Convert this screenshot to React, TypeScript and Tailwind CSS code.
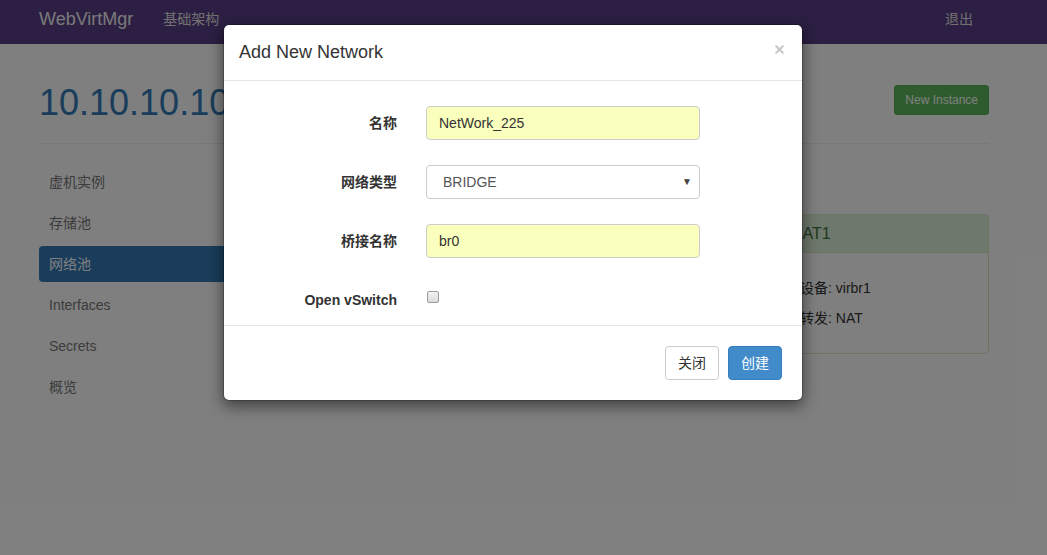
import { X } from "lucide-react";

const font = "font-['Liberation_Sans','Noto_Sans_CJK_SC',sans-serif]";

const navItems = ["虚机实例", "存储池", "网络池", "Interfaces", "Secrets", "概览"];

export default function App() {
  return (
    <div className={`relative h-[555px] w-[1047px] overflow-hidden bg-white text-[14px] text-[#333] ${font}`}>
      {/* Navbar */}
      <div className="flex h-[44px] items-center bg-[#583e86] pb-[5px] pl-[39px] pr-[74px]">
        <span className="text-[18px] text-[#f2f2f2]">WebVirtMgr</span>
        <span className="ml-[30px] text-[14px] text-[#e0e0e0]">基础架构</span>
        <span className="ml-auto text-[14px] text-[#e0e0e0]">退出</span>
      </div>

      {/* Page */}
      <div className="ml-[39px] w-[950px]">
        <div className="flex items-start justify-between border-b border-[#eeeeee] pb-[20px] pt-[39px]">
          <h1 className="h-[40px] text-[36px] leading-[40px] text-[#337ab7]">10.10.10.100</h1>
          <button className="mt-[2px] h-[30px] rounded-[3px] border border-[#4cae4c] bg-[#5cb85c] px-[10px] text-[12px] text-white">
            New Instance
          </button>
        </div>

        <div className="flex items-start">
          <div className="flex w-[200px] flex-col gap-[5px] pt-[20px]">
            {navItems.map((item) => (
              <div
                key={item}
                className={`flex h-[36px] items-center rounded-[4px] px-[10px] ${
                  item === "网络池" ? "bg-[#337ab7] text-white" : "text-[#777]"
                }`}
              >
                {item}
              </div>
            ))}
          </div>

          <div className="flex flex-1 items-start justify-end pt-[70px]">
            <div className="w-[214px] rounded-[4px] border border-[#d6e9c6]">
              <div className="flex h-[38px] items-center border-b border-[#d6e9c6] bg-[#dff0d8] px-[15px] text-[16px] text-[#3c763d]">
                NAT1
              </div>
              <div className="flex flex-col gap-[10px] py-[25px] pl-[24px] leading-[20px]">
                <div>设备: virbr1</div>
                <div>转发: NAT</div>
              </div>
            </div>
          </div>
        </div>
      </div>

      {/* Backdrop */}
      <div className="absolute inset-0 bg-black/50" />

      {/* Modal */}
      <div className="absolute left-[223px] top-[24px] w-[580px] rounded-[6px] border border-black/20 bg-white bg-clip-padding shadow-[0_5px_15px_rgba(0,0,0,0.5)]">
        <div className="flex h-[56px] items-center justify-between border-b border-[#e5e5e5] pl-[15px] pr-[16px]">
          <h4 className="text-[18px] text-[#333]">Add New Network</h4>
          <X className="mt-[-7px] h-[13px] w-[13px] text-[#c8c8c8]" strokeWidth={4} />
        </div>

        <div className="flex flex-col gap-[25px] pt-[25px]">
          <div className="flex items-center">
            <label className="w-[173px] text-right font-bold">名称</label>
            <input
              readOnly
              value="NetWork_225"
              className="ml-[29px] h-[34px] w-[274px] rounded-[4px] border border-[#cccccc] bg-[#faffbd] px-[12px] text-[14px] text-[#333] outline-none"
            />
          </div>

          <div className="flex items-center">
            <label className="w-[173px] text-right font-bold">网络类型</label>
            <div className="relative ml-[29px] flex h-[34px] w-[274px] items-center rounded-[4px] border border-[#cccccc] bg-white pl-[16px] text-[#555]">
              BRIDGE
              <span className="absolute right-[7px] top-[8px] text-[10px] text-[#444]">▼</span>
            </div>
          </div>

          <div className="flex items-center">
            <label className="w-[173px] text-right font-bold">桥接名称</label>
            <input
              readOnly
              value="br0"
              className="ml-[29px] h-[34px] w-[274px] rounded-[4px] border border-[#cccccc] bg-[#faffbd] px-[12px] text-[14px] text-[#333] outline-none"
            />
          </div>

          <div className="flex items-start pb-[15px] pt-[7px]">
            <label className="w-[173px] text-right font-bold leading-[20px]">Open vSwitch</label>
            <span className="ml-[30px] mt-[1px] h-[12px] w-[12px] rounded-[2px] border border-[#9a9a9a] bg-gradient-to-b from-[#f2f2f2] to-[#dcdcdc]" />
          </div>
        </div>

        <div className="flex justify-end gap-[9px] border-t border-[#e5e5e5] px-[20px] py-[20px]">
          <button className="h-[34px] rounded-[4px] border border-[#cccccc] bg-white px-[12px] text-[#333]">关闭</button>
          <button className="h-[34px] rounded-[4px] border border-[#357ebd] bg-[#428bca] px-[12px] text-white">创建</button>
        </div>
      </div>
    </div>
  );
}
